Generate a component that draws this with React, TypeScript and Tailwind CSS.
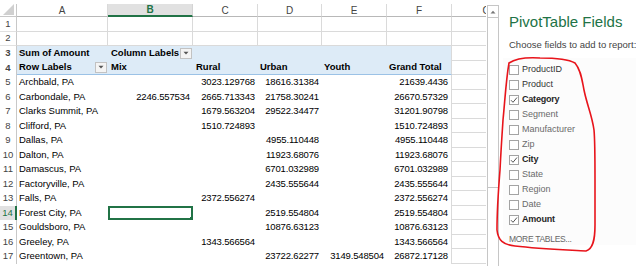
import React from "react";

const W = [
  "w-[17px]",
  "w-[91px]",
  "w-[85px]",
  "w-[65px]",
  "w-[64px]",
  "w-[65px]",
  "w-[65px]",
  "w-[70px]",
];

const DATA: [number, string, string, string, string, string, string][] = [
  [5, "Archbald, PA", "", "3023.129768", "18616.31384", "", "21639.4436"],
  [6, "Carbondale, PA", "2246.557534", "2665.713343", "21758.30241", "", "26670.57329"],
  [7, "Clarks Summit, PA", "", "1679.563204", "29522.34477", "", "31201.90798"],
  [8, "Clifford, PA", "", "1510.724893", "", "", "1510.724893"],
  [9, "Dallas, PA", "", "", "4955.110448", "", "4955.110448"],
  [10, "Dalton, PA", "", "", "11923.68076", "", "11923.68076"],
  [11, "Damascus, PA", "", "", "6701.032989", "", "6701.032989"],
  [12, "Factoryville, PA", "", "", "2435.555644", "", "2435.555644"],
  [13, "Falls, PA", "", "2372.556274", "", "", "2372.556274"],
  [14, "Forest City, PA", "", "", "2519.554804", "", "2519.554804"],
  [15, "Gouldsboro, PA", "", "", "10876.63123", "", "10876.63123"],
  [16, "Greeley, PA", "", "1343.566564", "", "", "1343.566564"],
  [17, "Greentown, PA", "", "", "23722.62277", "3149.548504", "26872.17128"],
];

const base = "shrink-0 h-full flex items-center overflow-hidden whitespace-nowrap";

function Dropdown() {
  return (
    <span className="shrink-0 w-[12px] h-[11px] mr-[1px] border border-[#c2c2c2] bg-[#f4f4f4] flex items-center justify-center">
      <svg width="6" height="4" viewBox="0 0 6 4">
        <path d="M0.5 0.8 L5.5 0.8 L3 3.4 Z" fill="#555" />
      </svg>
    </span>
  );
}

function RowNum({ n, sel }: { n: number; sel?: boolean }) {
  return (
    <div
      className={
        base +
        " " +
        W[0] +
        " justify-center text-[9.5px] " +
        (sel
          ? "bg-[#e1e1e1] text-[#217346] border-r-2 border-r-[#217346]"
          : "text-[#444] border-r border-r-[#c8c8c8]") +
        (n <= 2 ? " border-b border-b-[#e1e1e1]" : "")
      }
    >
      {n}
    </div>
  );
}

function GCell() {
  return <div className={base + " " + W[7] + " border-r border-b border-[#dadada]"} />;
}

function Check({ on }: { on?: boolean }) {
  return (
    <span className="shrink-0 w-[10px] h-[10px] border border-[#a3a3a3] bg-white flex items-center justify-center">
      {on && (
        <svg width="8" height="8" viewBox="0 0 8 8">
          <polyline points="1,4.2 3,6.3 7,1.5" fill="none" stroke="#555" strokeWidth="1" />
        </svg>
      )}
    </span>
  );
}

const FIELDS: [string, boolean, string][] = [
  ["ProductID", false, "text-[#333]"],
  ["Product", false, "text-[#333]"],
  ["Category", true, ""],
  ["Segment", false, "text-[#6a6a6a]"],
  ["Manufacturer", false, "text-[#6a6a6a]"],
  ["Zip", false, "text-[#6a6a6a]"],
  ["City", true, ""],
  ["State", false, "text-[#6a6a6a]"],
  ["Region", false, "text-[#6a6a6a]"],
  ["Date", false, "text-[#6a6a6a]"],
  ["Amount", true, ""],
];

export default function App() {
  const rowH = "h-[14.5px] flex";
  return (
    <div
      className="relative w-[636px] h-[266px] overflow-hidden bg-white flex text-black"
      style={{ fontFamily: '"Liberation Sans", Arial, sans-serif' }}
    >
      {/* Sheet */}
      <div className="w-[486px] shrink-0 overflow-hidden flex flex-col">
        <div className="h-[4px] shrink-0" />
        {/* column headers */}
        <div className="h-[13px] flex shrink-0">
          <div className={base + " " + W[0] + " justify-end items-end border-r border-b border-[#c8c8c8] pr-[2px] pb-[1px]"}>
            <svg width="11" height="11" viewBox="0 0 11 11">
              <path d="M11 0 L11 11 L0 11 Z" fill="#d0d0d0" />
            </svg>
          </div>
          {["A", "B", "C", "D", "E", "F", "G"].map((c, i) => (
            <div
              key={c}
              className={
                base +
                " " +
                W[i + 1] +
                " justify-center text-[10px] " +
                (c === "B"
                  ? "bg-[#e1e1e1] text-[#217346] font-bold border-r border-r-[#d4d4d4] border-b-2 border-b-[#217346]"
                  : "text-[#444] border-r border-b border-r-[#dadada] border-b-[#b8b8b8]")
              }
            >
              {c}
            </div>
          ))}
        </div>
        {/* rows 1-2 */}
        {[1, 2].map((n) => (
          <div key={n} className={rowH}>
            <RowNum n={n} />
            {[1, 2, 3, 4, 5, 6].map((i) => (
              <div key={i} className={base + " " + W[i] + " border-r border-b border-[#dadada]"} />
            ))}
            <GCell />
          </div>
        ))}
        {/* row 3 */}
        <div className={rowH + " text-[9.5px] font-bold"}>
          <RowNum n={3} />
          <div className={base + " " + W[1] + " bg-[#ddebf7] pl-[2px]"}>Sum of Amount</div>
          <div className={base + " " + W[2] + " bg-[#ddebf7] pl-[3px]"}>
            <span className="flex-1">Column Labels</span>
            <Dropdown />
          </div>
          <div className={base + " " + W[3] + " bg-[#ddebf7]"} />
          <div className={base + " " + W[4] + " bg-[#ddebf7]"} />
          <div className={base + " " + W[5] + " bg-[#ddebf7]"} />
          <div className={base + " " + W[6] + " bg-[#ddebf7] border-r border-[#dadada]"} />
          <GCell />
        </div>
        {/* row 4 */}
        <div className={rowH + " text-[9.5px] font-bold"}>
          <RowNum n={4} />
          <div className={base + " " + W[1] + " bg-[#ddebf7] pl-[2px] border-b border-b-[#9bc2e6]"}>
            <span className="flex-1">Row Labels</span>
            <Dropdown />
          </div>
          <div className={base + " " + W[2] + " bg-[#ddebf7] pl-[3px] border-b border-b-[#9bc2e6]"}>Mix</div>
          <div className={base + " " + W[3] + " bg-[#ddebf7] pl-[3px] border-b border-b-[#9bc2e6]"}>Rural</div>
          <div className={base + " " + W[4] + " bg-[#ddebf7] pl-[2px] border-b border-b-[#9bc2e6]"}>Urban</div>
          <div className={base + " " + W[5] + " bg-[#ddebf7] pl-[2px] border-b border-b-[#9bc2e6]"}>Youth</div>
          <div className={base + " " + W[6] + " bg-[#ddebf7] pl-[2px] border-b border-b-[#9bc2e6] border-r border-r-[#dadada]"}>
            Grand Total
          </div>
          <GCell />
        </div>
        {/* data rows */}
        {DATA.map(([n, label, ...nums]) => (
          <div key={n} className={rowH + " text-[9.5px]"}>
            <RowNum n={n} sel={n === 14} />
            <div className={base + " " + W[1] + " pl-[2px]"}>{label}</div>
            {nums.map((v, i) => {
              const sel = n === 14 && i === 0;
              return (
                <div
                  key={i}
                  className={
                    base +
                    " " +
                    W[i + 2] +
                    " justify-end pr-[3px] tracking-[-0.15px]" +
                    (i === 4 ? " border-r border-[#dadada]" : "") +
                    (sel ? " relative border-2 border-[#217346]" : "")
                  }
                >
                  {v}
                  {sel && (
                    <span className="absolute right-[-2px] bottom-[-2px] w-[4px] h-[4px] bg-[#217346] border border-white" />
                  )}
                </div>
              );
            })}
            <GCell />
          </div>
        ))}
      </div>

      {/* Scrollbar */}
      <div className="w-[13px] shrink-0 pt-[5px] pl-[1px] flex flex-col">
        <div className="flex-1 border-x border-[#c6c6c6] border-t flex flex-col bg-white">
          <div className="h-[11px] flex items-center justify-center">
            <svg width="6" height="4" viewBox="0 0 6 4">
              <path d="M0.5 3.5 L5.5 3.5 L3 0.8 Z" fill="#777" />
            </svg>
          </div>
          <div className="h-[171px] border-y border-[#c6c6c6] bg-white" />
          <div className="flex-1 bg-white" />
        </div>
      </div>

      {/* PivotTable Fields pane */}
      <div className="flex-1 bg-white pl-[10px] pt-[13px] overflow-hidden whitespace-nowrap">
        <div className="h-[18px] leading-[18px] text-[15px] text-[#217346]">PivotTable Fields</div>
        <div className="mt-[8px] h-[12px] leading-[12px] text-[9.5px] text-[#444]">
          Choose fields to add to report:
        </div>
        <div className="mt-[7px] pt-[4px] -ml-[6px] pl-[6px] bg-[#fcfcfc]">
          {FIELDS.map(([name, on, color]) => (
            <div key={name} className="h-[15px] flex items-center gap-[3px]">
              <Check on={on} />
              <span
                className={
                  "text-[9px] " +
                  (on ? "font-bold text-[#262626] tracking-[-0.2px]" : color)
                }
              >
                {name}
              </span>
            </div>
          ))}
          <div className="mt-[6px] h-[12px] leading-[12px] text-[8.5px] text-[#666] tracking-[-0.3px]">
            MORE TABLES...
          </div>
        </div>
      </div>

      {/* red hand-drawn loop */}
      <svg
        className="absolute inset-0 pointer-events-none"
        width="636"
        height="266"
        viewBox="0 0 636 266"
      >
        <path
          d="M509 63 C515 59, 525 57, 540 58 C555 58, 568 59, 575 63 C581 70, 582 80, 584 90 C587 105, 592 115, 594 130 C595 140, 595 160, 595 180 L595 225 C595 240, 593 249, 586 251 C570 250, 540 249, 515 246 C503 245, 498 240, 497 230 C497 215, 498 195, 500 170 C501 150, 502 135, 503 120 C505 100, 506 80, 509 63"
          fill="none"
          stroke="#e8141b"
          strokeWidth="1.6"
          strokeLinecap="round"
        />
      </svg>
    </div>
  );
}
